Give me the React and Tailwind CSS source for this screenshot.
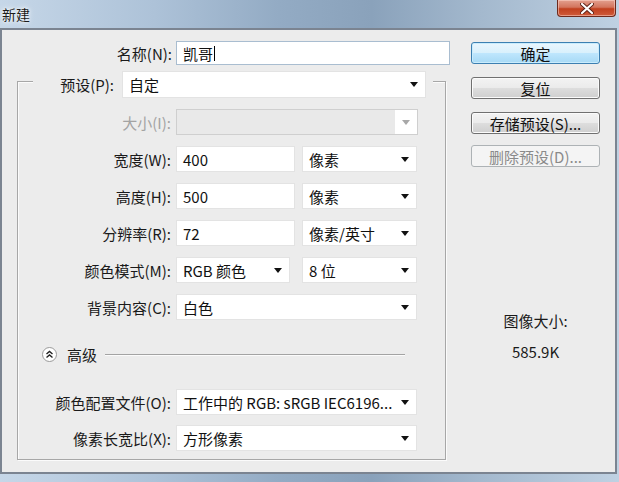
import React from 'react';

const FONT = { fontFamily: '"Microsoft YaHei", "Noto Sans CJK SC", "Noto Sans", sans-serif' };

function Arrow({ disabled }) {
  return (
    <svg width="8" height="5" viewBox="0 0 8 5" className="shrink-0">
      <path d="M0 0 H8 L4 5 Z" fill={disabled ? '#a8a8a8' : '#111'} />
    </svg>
  );
}

function Select({ value, w, disabled }) {
  if (disabled) {
    return (
      <div className={`h-[26px] flex border border-[#cfcfcf] bg-white ${w}`}>
        <div className="flex-1 bg-[#e9e9e9]" />
        <div className="w-[22px] flex items-center justify-center">
          <Arrow disabled />
        </div>
      </div>
    );
  }
  return (
    <div className={`h-[26px] flex items-center justify-between bg-white border border-[#e3e3e3] pl-[6px] pr-[7px] text-[#111] ${w}`}>
      <span className="whitespace-nowrap">{value}</span>
      <Arrow />
    </div>
  );
}

function Input({ value, w }) {
  return (
    <div className={`h-[26px] flex items-center bg-white border border-[#e3e3e3] pl-[6px] text-[#111] ${w}`}>
      {value}
    </div>
  );
}

function Row({ label, children, mt, disabled }) {
  return (
    <div className={`flex items-center h-[26px] ${mt}`}>
      <div className={`w-[154px] text-right pr-[1px] whitespace-nowrap ${disabled ? 'text-[#a3a3a3]' : 'text-[#1a1a1a]'}`}>{label}</div>
      <div className="ml-[4px] flex items-center gap-[7px]">{children}</div>
    </div>
  );
}

function Button({ children, primary, disabled, mt }) {
  let cls = 'border-[#707070] text-[#111] bg-[linear-gradient(180deg,#f3f3f3_0%,#ebebeb_48%,#dddddd_52%,#cfcfcf_100%)] shadow-[inset_0_0_0_1px_#fbfbfb]';
  if (primary) cls = 'border-[#3c7fb1] text-[#111] bg-[linear-gradient(180deg,#eaf6fd_0%,#d9f0fc_48%,#bee6fd_52%,#a7d9f5_100%)] shadow-[inset_0_0_0_1px_#c9ecfd]';
  if (disabled) cls = 'border-[#adb2b5] text-[#8a8a8a] bg-[#f4f4f4]';
  return (
    <div className={`h-[22px] w-[129px] rounded-[3px] border flex items-center justify-center whitespace-nowrap ${cls} ${mt}`}>
      {children}
    </div>
  );
}

export default function App() {
  return (
    <div
      className="w-[619px] h-[482px] overflow-hidden text-[15px] leading-none bg-[linear-gradient(90deg,#c6d7e8_0%,#adc2d8_25%,#93abc4_45%,#8aa2bb_60%,#a4b9ce_78%,#bfd1e2_100%)]"
      style={FONT}
    >
      {/* title bar */}
      <div className="h-[28px] flex justify-between items-start">
        <span className="mt-[7px] ml-[2px] text-[14px] text-[#1b1b1b] [text-shadow:0_0_6px_#ffffff,0_0_3px_#ffffff]">新建</span>
        <div className="mr-[3px] w-[59px] h-[17px] rounded-b-[4px] border border-t-0 border-[#6d2a1d] bg-[linear-gradient(180deg,#e3a08f_0%,#d3755e_45%,#c1401f_55%,#cf5b3a_100%)] shadow-[inset_0_0_0_1px_rgba(255,220,210,0.5)] flex items-center justify-center">
          <svg width="14" height="11" viewBox="0 0 14 11">
            <path d="M2 1 L12 10 M12 1 L2 10" stroke="#5a2016" strokeWidth="4" strokeLinecap="round" />
            <path d="M2 1 L12 10 M12 1 L2 10" stroke="#ffffff" strokeWidth="2.2" strokeLinecap="round" />
          </svg>
        </div>
      </div>

      {/* client area */}
      <div className="w-[617px] h-[446px] border-2 border-[#7b8491] bg-[#ececec] flex">
        {/* left column */}
        <div className="w-[449px] shrink-0">
          <div className="flex items-center mt-[11px] h-[24px]">
            <div className="w-[170px] text-right text-[#1a1a1a] whitespace-nowrap">名称(N):</div>
            <div className="ml-[4px] w-[274px] h-[24px] bg-white border border-[#a9bdd0] flex items-center pl-[6px] text-[#111]">
              凯哥<span className="ml-[1px] w-[1px] h-[15px] bg-black" />
            </div>
          </div>

          {/* group box */}
          <div className="ml-[15px] mt-[16px] w-[429px] h-[379px] border border-[#a7a7a7] shadow-[inset_1px_1px_0_#fbfbfb,1px_1px_0_#fbfbfb]">
            <div className="-mt-[11px] ml-[15px] w-[400px] h-[27px] bg-[#ececec] flex items-center">
              <div className="w-[81px] text-right text-[#1a1a1a] whitespace-nowrap">预设(P):</div>
              <div className="ml-[8px] w-[304px] h-[27px] flex items-center justify-between bg-white border border-[#e3e3e3] pl-[6px] pr-[7px] text-[#111]">
                <span>自定</span>
                <Arrow />
              </div>
            </div>

            <Row label="大小(I):" mt="mt-[11px]" disabled>
              <Select w="w-[242px]" disabled />
            </Row>
            <Row label="宽度(W):" mt="mt-[11px]">
              <Input value="400" w="w-[119px]" />
              <Select value="像素" w="w-[115px]" />
            </Row>
            <Row label="高度(H):" mt="mt-[11px]">
              <Input value="500" w="w-[119px]" />
              <Select value="像素" w="w-[115px]" />
            </Row>
            <Row label="分辨率(R):" mt="mt-[11px]">
              <Input value="72" w="w-[119px]" />
              <Select value="像素/英寸" w="w-[115px]" />
            </Row>
            <Row label="颜色模式(M):" mt="mt-[11px]">
              <div className="flex items-center gap-[12px]">
                <Select value="RGB 颜色" w="w-[114px]" />
                <Select value="8 位" w="w-[115px]" />
              </div>
            </Row>
            <Row label="背景内容(C):" mt="mt-[11px]">
              <Select value="白色" w="w-[241px]" />
            </Row>

            <div className="mt-[26px] h-[16px] flex items-center">
              <div className="ml-[24px] w-[15px] h-[15px] rounded-full bg-white border border-[#9a9a9a] flex items-center justify-center">
                <svg width="9" height="9" viewBox="0 0 9 9">
                  <path d="M1.5 4 L4.5 1.5 L7.5 4 M1.5 7.5 L4.5 5 L7.5 7.5" stroke="#222" strokeWidth="1.4" fill="none" />
                </svg>
              </div>
              <span className="ml-[10px] text-[#1a1a1a]">高级</span>
              <div className="ml-[8px] w-[300px] h-[1px] bg-[#a3a3a3] shadow-[0_1px_0_#fbfbfb]" />
            </div>

            <Row label="颜色配置文件(O):" mt="mt-[27px]">
              <Select value="工作中的 RGB: sRGB IEC6196..." w="w-[241px]" />
            </Row>
            <Row label="像素长宽比(X):" mt="mt-[10px]">
              <Select value="方形像素" w="w-[241px]" />
            </Row>
          </div>
        </div>

        {/* right column */}
        <div className="pl-[20px] flex flex-col">
          <Button primary mt="mt-[12px]">确定</Button>
          <Button mt="mt-[13px]">复位</Button>
          <Button mt="mt-[13px]">存储预设(S)...</Button>
          <Button disabled mt="mt-[11px]">删除预设(D)...</Button>
          <div className="mt-[146px] w-[129px] text-center text-[#1a1a1a]">图像大小:</div>
          <div className="mt-[16px] w-[129px] text-center text-[#1a1a1a]">585.9K</div>
        </div>
      </div>
    </div>
  );
}
